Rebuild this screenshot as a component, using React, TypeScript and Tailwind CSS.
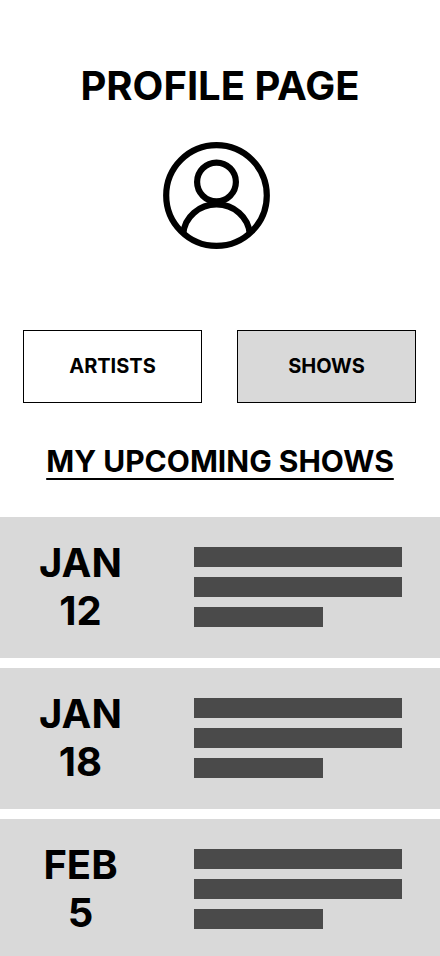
const shows = [
  { month: "JAN", day: "12" },
  { month: "JAN", day: "18" },
  { month: "FEB", day: "5" },
];

function ProfileIcon() {
  return (
    <svg viewBox="0 0 107 107" className="size-[107px]" fill="none" stroke="black" strokeWidth="6.2" role="img" aria-label="Profile">
      <circle cx="53.5" cy="53.5" r="50.3" />
      <circle cx="53.5" cy="40" r="19.4" />
      <path d="M20.300 91.500A33.300 31.500 0 0 1 86.700 91.500" />
    </svg>
  );
}

export default function App() {
  return (
    <main className="h-screen overflow-hidden bg-white font-['Inter',sans-serif] font-bold text-black">
      <h1 className="pt-[62px] text-center text-[40px] leading-12">PROFILE PAGE</h1>
      <div className="mt-8 flex justify-center pr-[7px]">
        <ProfileIcon />
      </div>
      <div className="mt-[81px] grid grid-cols-2 gap-[35px] pr-6 pl-[23px] text-xl">
        <button className="h-[73px] border border-black bg-white pb-0.5">ARTISTS</button>
        <button className="h-[73px] border border-black bg-[#d9d9d9] pb-0.5">SHOWS</button>
      </div>
      <h2 className="mt-10 text-center text-[30px] leading-9 underline decoration-2 underline-offset-6">MY UPCOMING SHOWS</h2>
      <ul className="mt-[38px] flex flex-col gap-[10px]">
        {shows.map((show) => (
          <li key={show.month + show.day} className="flex h-[141px] items-start bg-[#d9d9d9]">
            <time className="mt-[22px] w-40 pl-px text-center text-[40px] leading-12">
              {show.month}
              <br />
              {show.day}
            </time>
            <div className="mt-[30px] mr-[38px] ml-[34px] flex flex-1 flex-col gap-[10px]">
              <div className="h-5 bg-[#4a4a4a]" />
              <div className="h-5 bg-[#4a4a4a]" />
              <div className="h-5 w-[62%] bg-[#4a4a4a]" />
            </div>
          </li>
        ))}
      </ul>
    </main>
  );
}
